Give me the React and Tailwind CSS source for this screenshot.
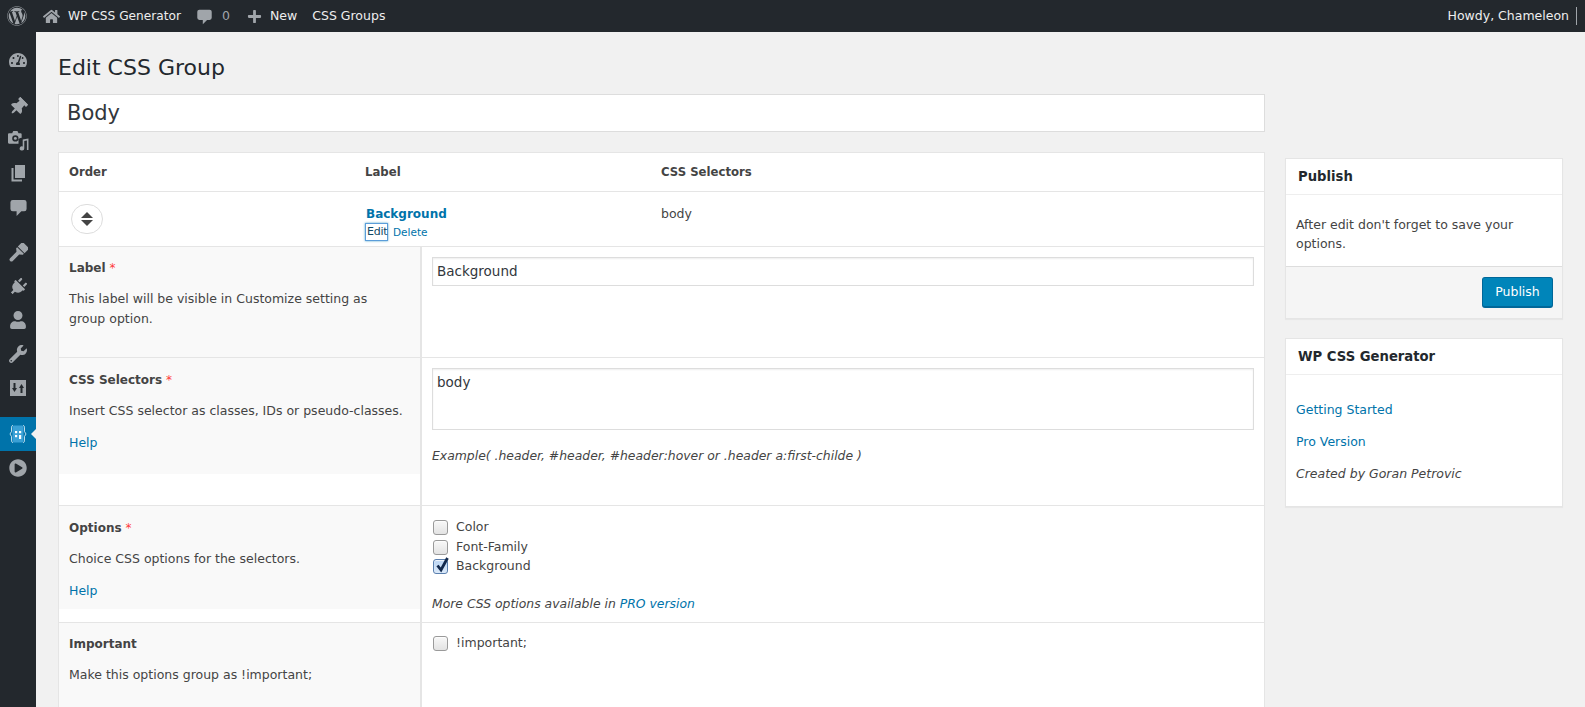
import React from 'react';
import { FaWordpress, FaHome, FaPlus, FaTachometerAlt, FaThumbtack, FaPlug, FaUser, FaWrench, FaPlayCircle } from 'react-icons/fa';

function Bubble({ size = 18, className = '' }) {
  return (
    <svg className={className} width={size} height={size} viewBox="0 0 20 20" fill="#a0a5aa">
      <path d="M4 2h12a2.500 2.500 0 0 1 2.500 2.500v7A2.500 2.500 0 0 1 16 14h-3l-5 5v-5H4a2.500 2.500 0 0 1-2.500-2.500v-7A2.500 2.500 0 0 1 4 2z" />
    </svg>
  );
}

function BrushIcon() {
  return (
    <svg width="19" height="19" viewBox="0 0 20 20" fill="#a0a5aa">
      <g transform="rotate(45 10 10)">
        <path d="M5 -1h10v7H5zM5 7h10v1.500L12 11v9.500a2 2 0 0 1-4 0V11L5 8.500z" />
      </g>
    </svg>
  );
}

function PagesIcon() {
  return (
    <svg width="18" height="18" viewBox="0 0 18 18" fill="#a0a5aa">
      <path d="M6 1h10v13H6z" />
      <path d="M2.500 4H4.500v11.500H13v2H2.500z" />
    </svg>
  );
}

function MediaIcon() {
  return (
    <svg className="translate-y-[1px]" width="21" height="21" viewBox="0 0 20 20" fill="#a0a5aa">
      <path d="M1 3h3l1-2h4l1 2h2a1 1 0 0 1 1 1v3.500a3 3 0 0 0-3 1.500V13H1a1 1 0 0 1-1-1V4a1 1 0 0 1 1-1zm6 2a3 3 0 1 0 0 6 3 3 0 0 0 0-6z" />
      <path d="M14 9 19.500 8v11h-1.500V10l-2.500.5V17.500a2.200 2 0 1 1-1.500-1.900z" />
      <circle cx="7" cy="8" r="1.400" />
    </svg>
  );
}

function SlidersIcon() {
  return (
    <svg width="18" height="18" viewBox="0 0 18 18">
      <path fill="#a0a5aa" fillRule="evenodd" d="M1 1h16v16H1zM4.500 4v5H3l2.500 4L8 9H6.500V4zM11.500 14V9H10l2.500-4L15 9h-1.500v5z" />
    </svg>
  );
}

function CssIcon() {
  return (
    <svg width="18" height="20" viewBox="0 0 18 20">
      <path d="M4 1.500C2.500 1.500 2.500 3 2.500 4v3.500L1 10l1.500 2.500V16c0 1 0 2.500 1.500 2.500M14 1.500c1.500 0 1.500 1.500 1.500 2.500v3.500L17 10l-1.500 2.500V16c0 1 0 2.500-1.500 2.500" fill="none" stroke="#fff" strokeWidth="1" opacity="0.75" />
      <rect x="3.500" y="1.500" width="11" height="17" rx="1.500" fill="#3aa0d5" />
      <rect x="6" y="7" width="2.200" height="2.200" fill="#fff" />
      <rect x="10" y="7" width="2.200" height="2.200" fill="#fff" />
      <rect x="6" y="11" width="2.200" height="2.200" fill="#fff" />
      <rect x="10" y="11" width="2.200" height="4" fill="#fff" />
    </svg>
  );
}

function SideItem({ children, active }) {
  return (
    <div className={`relative h-[34px] flex items-center justify-center ${active ? 'bg-[#0073aa]' : ''}`}>
      {children}
      {active && <span className="absolute right-0 top-[12px] w-0 h-0 border-y-[5px] border-y-transparent border-r-[5px] border-r-[#f1f1f1]" />}
    </div>
  );
}

function Sidebar() {
  const ic = 'text-[#a0a5aa] text-[18px]';
  return (
    <aside className="w-[36px] shrink-0 bg-[#23282d] pt-[11px]">
      <SideItem><FaTachometerAlt className={ic} /></SideItem>
      <div className="h-[11px]" />
      <SideItem><FaThumbtack className={`${ic} rotate-45 translate-y-[2px]`} /></SideItem>
      <SideItem><MediaIcon /></SideItem>
      <SideItem><PagesIcon /></SideItem>
      <SideItem><Bubble size={19} /></SideItem>
      <div className="h-[11px]" />
      <SideItem><BrushIcon /></SideItem>
      <SideItem><FaPlug className={`${ic} rotate-45 translate-y-[1px]`} /></SideItem>
      <SideItem><FaUser className={ic} /></SideItem>
      <SideItem><FaWrench className={`${ic} text-[17px]`} /></SideItem>
      <SideItem><SlidersIcon /></SideItem>
      <div className="h-[12px]" />
      <SideItem active><CssIcon /></SideItem>
      <SideItem><FaPlayCircle className={ic} /></SideItem>
    </aside>
  );
}

function TopBar() {
  return (
    <header className="h-[32px] shrink-0 bg-[#23282d] flex items-center text-[#eeeeee] text-[12.500px]">
      <FaWordpress className="ml-[7px] text-[20px] text-[#a0a5aa]" />
      <FaHome className="ml-[16px] text-[17px] text-[#a0a5aa]" />
      <span className="ml-[8px] text-[12.200px]">WP CSS Generator</span>
      <Bubble size={17} className="ml-[15px]" />
      <span className="ml-[9px] text-[#a0a5aa]">0</span>
      <FaPlus className="ml-[17px] text-[15px] text-[#a0a5aa]" />
      <span className="ml-[8px]">New</span>
      <span className="ml-[15px]">CSS Groups</span>
      <span className="ml-auto">Howdy, Chameleon</span>
      <span className="ml-[7px] mr-[8px] w-[1px] h-[18px] bg-[#a0a5aa]" />
    </header>
  );
}

function Req() {
  return <span className="text-[#ff3b3b] font-normal"> *</span>;
}

function Check({ label, checked }) {
  return (
    <label className="h-[19.500px] flex items-center text-[#444] text-[12.500px]">
      <span className={`relative w-[15px] h-[15px] ml-[1px] rounded-[3px] border shadow-[inset_0_1px_1px_rgba(255,255,255,0.8)] ${checked ? 'border-[#5a7fae] bg-gradient-to-b from-[#b9d4f3] to-[#dbe9f9]' : 'border-[#9a9a9a] bg-gradient-to-b from-[#f8f8f8] to-[#e3e3e3]'}`}>
        {checked && (
          <svg className="absolute left-[1px] -top-[4px]" width="15" height="17" viewBox="0 0 15 17">
            <path d="M2.500 9.500 6 14 12.500 2" fill="none" stroke="#12294d" strokeWidth="2.800" />
          </svg>
        )}
      </span>
      <span className="ml-[8px]">{label}</span>
    </label>
  );
}

function FieldRow({ left, right, className }) {
  return (
    <div className={`flex border-t border-[#e5e5e5] ${className}`}>
      <div className="w-[361px] shrink-0 self-stretch">
        {left}
      </div>
      <div className="flex-1 border-l-2 border-[#e5e5e5] px-[10px]">
        {right}
      </div>
    </div>
  );
}

function Left({ title, desc, help, className }) {
  return (
    <div className={`bg-[#f9f9f9] pl-[10px] pr-[40px] ${className}`}>
      <div className="font-bold text-[#444] text-[12px] leading-[20px]">{title}</div>
      <p className="mt-[11px] text-[#444] text-[12.500px] leading-[20px] -mr-[32px]">{desc}</p>
      {help && <a className="block mt-[12px] text-[#0073aa] text-[12.500px] leading-[20px]">Help</a>}
    </div>
  );
}

function MainTable() {
  return (
    <div className="bg-white border border-[#e5e5e5] h-[700px] mt-[20px]">
      <div className="h-[38px] pt-[1px] flex items-center font-bold text-[#444] text-[11.700px]">
        <div className="w-[306px] pl-[10px]">Order</div>
        <div className="w-[296px]">Label</div>
        <div>CSS Selectors</div>
      </div>
      <div className="h-[55px] border-t border-[#e5e5e5] flex">
        <div className="w-[306px] pl-[12px] pt-[12px]">
          <div className="w-[32px] h-[30px] rounded-full border border-[#ddd] flex flex-col items-center justify-center gap-[2px]">
            <span className="w-0 h-0 border-x-[6px] border-x-transparent border-b-[6px] border-b-[#444]" />
            <span className="w-0 h-0 border-x-[6px] border-x-transparent border-t-[6px] border-t-[#444]" />
          </div>
        </div>
        <div className="w-[296px] pt-[12px]">
          <a className="block pl-[1px] font-bold text-[#0073aa] text-[12px] leading-[20px]">Background</a>
          <div className="flex items-center text-[10.500px] leading-[16px] mt-[-1px]">
            <span className="px-[1px] w-[23px] border border-[#5b9dd9] shadow-[0_0_2px_rgba(30,140,190,0.8)] text-[#124964] text-[11px] tracking-tight">Edit</span>
            <span className="ml-[5px] text-[#0073aa]">Delete</span>
          </div>
        </div>
        <div className="pt-[12px] text-[#444] text-[12.500px] leading-[20px]">body</div>
      </div>
      <FieldRow
        className="h-[111px]"
        left={<Left className="h-full pt-[11px]" title={<>Label<Req /></>} desc={<>This label will be visible in Customize setting as<br />group option.</>} />}
        right={<div className="pt-[10px]"><div className="h-[29px] border border-[#ddd] flex items-center pl-[4px] text-[#32373c] text-[13.500px] shadow-[inset_0_1px_2px_rgba(0,0,0,0.07)]">Background</div></div>}
      />
      <FieldRow
        className="h-[148px]"
        left={<Left className="h-[116px] pt-[12px]" title={<>CSS Selectors<Req /></>} desc="Insert CSS selector as classes, IDs or pseudo-classes." help />}
        right={
          <div className="pt-[10px]">
            <div className="h-[62px] border border-[#ddd] px-[4px] pt-[3px] text-[#32373c] text-[13.500px] leading-[20px] shadow-[inset_0_1px_2px_rgba(0,0,0,0.07)]">body</div>
            <p className="mt-[16px] italic text-[#444] text-[12.400px] leading-[20px]">Example( .header, #header, #header:hover or .header a:first-childe )</p>
          </div>
        }
      />
      <FieldRow
        className="h-[117px]"
        left={<Left className="h-[103px] pt-[12px]" title={<>Options<Req /></>} desc="Choice CSS options for the selectors." help />}
        right={
          <div className="pt-[12px]">
            <Check label="Color" />
            <Check label="Font-Family" />
            <Check label="Background" checked />
            <p className="mt-[17px] italic text-[#444] text-[12.400px] leading-[20px]">More CSS options available in <a className="text-[#0073aa]">PRO version</a></p>
          </div>
        }
      />
      <FieldRow
        className="h-[200px]"
        left={<Left className="h-[100px] pt-[11px]" title="Important" desc="Make this options group as !important;" />}
        right={<div className="pt-[11px]"><Check label="!important;" /></div>}
      />
    </div>
  );
}

function Box({ title, children, className }) {
  return (
    <section className={`bg-white border border-[#e5e5e5] shadow-[0_1px_1px_rgba(0,0,0,0.04)] ${className}`}>
      <h2 className="h-[36px] border-b border-[#eeeeee] pl-[12px] flex items-center font-bold text-[#23282d] text-[13.200px]">{title}</h2>
      {children}
    </section>
  );
}

export default function App() {
  return (
    <div className="h-screen overflow-hidden flex flex-col bg-[#f1f1f1] font-['DejaVu_Sans',sans-serif]">
      <TopBar />
      <div className="flex flex-1 min-h-0">
        <Sidebar />
        <main className="flex-1 pl-[22px] flex gap-[20px]">
          <div className="w-[1207px] shrink-0">
            <h1 className="mt-[21px] text-[22px] leading-[30px] text-[#23282d]">Edit CSS Group</h1>
            <div className="mt-[11px] h-[38px] pt-[2px] bg-white border border-[#dddddd] flex items-center pl-[8px] text-[21px] text-[#32373c]">Body</div>
            <MainTable />
          </div>
          <div className="w-[278px] shrink-0 pt-[126px]">
            <Box title="Publish">
              <div className="px-[10px] pt-[20px] text-[#444] text-[12.500px] leading-[19px] h-[71px]">After edit don't forget to save your options.</div>
              <div className="h-[52px] border-t border-[#dddddd] bg-[#f5f5f5] flex justify-end items-start pt-[10px] pr-[9px]">
                <button className="w-[71px] h-[31px] rounded-[3px] bg-[#0085ba] border border-[#006799] border-b-2 text-white text-[12.500px]">Publish</button>
              </div>
            </Box>
            <Box title="WP CSS Generator" className="mt-[19px] h-[169px]">
              <div className="px-[10px] pt-[25px] text-[12.500px] leading-[20px]">
                <a className="block text-[#0073aa]">Getting Started</a>
                <a className="block mt-[12px] text-[#0073aa]">Pro Version</a>
                <p className="mt-[12px] italic text-[#444]">Created by Goran Petrovic</p>
              </div>
            </Box>
          </div>
        </main>
      </div>
    </div>
  );
}
